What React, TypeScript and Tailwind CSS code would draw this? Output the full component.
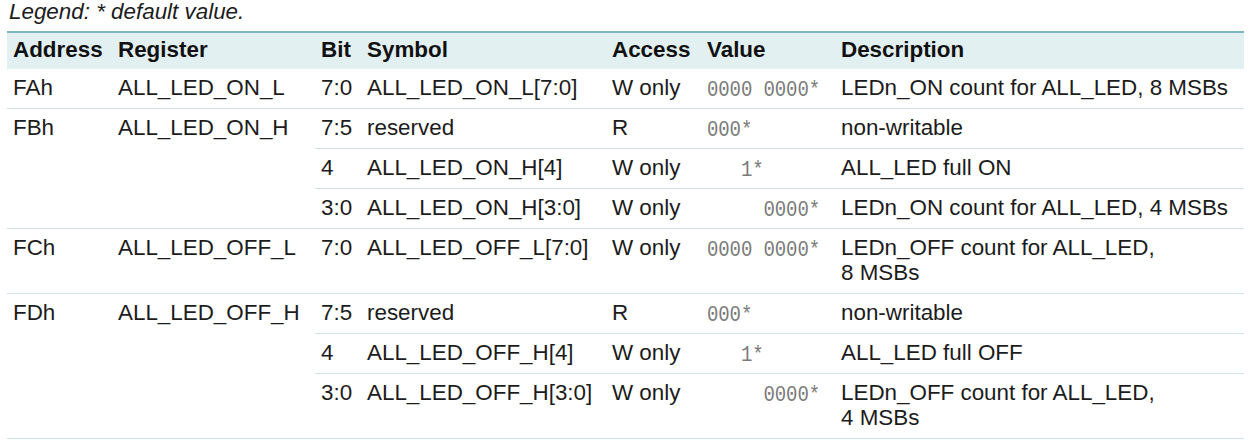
import React from "react";

type Row = {
  bit: string;
  symbol: string;
  access: string;
  value: string;
  desc: React.ReactNode;
};

type Group = { addr: string; reg: string; rows: Row[] };

const groups: Group[] = [
  {
    addr: "FAh",
    reg: "ALL_LED_ON_L",
    rows: [
      { bit: "7:0", symbol: "ALL_LED_ON_L[7:0]", access: "W only", value: "0000 0000*", desc: "LEDn_ON count for ALL_LED, 8 MSBs" },
    ],
  },
  {
    addr: "FBh",
    reg: "ALL_LED_ON_H",
    rows: [
      { bit: "7:5", symbol: "reserved", access: "R", value: "000*", desc: "non-writable" },
      { bit: "4", symbol: "ALL_LED_ON_H[4]", access: "W only", value: "   1*", desc: "ALL_LED full ON" },
      { bit: "3:0", symbol: "ALL_LED_ON_H[3:0]", access: "W only", value: "     0000*", desc: "LEDn_ON count for ALL_LED, 4 MSBs" },
    ],
  },
  {
    addr: "FCh",
    reg: "ALL_LED_OFF_L",
    rows: [
      {
        bit: "7:0",
        symbol: "ALL_LED_OFF_L[7:0]",
        access: "W only",
        value: "0000 0000*",
        desc: (
          <>
            LEDn_OFF count for ALL_LED,
            <br />8 MSBs
          </>
        ),
      },
    ],
  },
  {
    addr: "FDh",
    reg: "ALL_LED_OFF_H",
    rows: [
      { bit: "7:5", symbol: "reserved", access: "R", value: "000*", desc: "non-writable" },
      { bit: "4", symbol: "ALL_LED_OFF_H[4]", access: "W only", value: "   1*", desc: "ALL_LED full OFF" },
      {
        bit: "3:0",
        symbol: "ALL_LED_OFF_H[3:0]",
        access: "W only",
        value: "     0000*",
        desc: (
          <>
            LEDn_OFF count for ALL_LED,
            <br />4 MSBs
          </>
        ),
      },
    ],
  },
];

const cell = "align-top pt-[6px] pb-[8px] pl-[6px] pr-0 border-b border-[#cfe2e9] whitespace-nowrap";
const th = "pl-[6px] pt-[4px] pb-[7px] font-bold";

export default function App() {
  return (
    <div className="w-[1249px] h-[445px] bg-white text-[#1c1c1c] font-['Liberation_Sans',Arial,sans-serif] text-[22.4px] leading-[25px]">
      <div className="pl-[9px] italic leading-[24px] h-[31px]">Legend: * default value.</div>
      <table className="ml-[7px] w-[1237px] border-collapse table-fixed">
        <colgroup>
          <col className="w-[105px]" />
          <col className="w-[203px]" />
          <col className="w-[46px]" />
          <col className="w-[245px]" />
          <col className="w-[95px]" />
          <col className="w-[134px]" />
          <col />
        </colgroup>
        <thead>
          <tr className="bg-[#e2f0f1] border-t-2 border-[#7db3c3] text-[#111] text-left">
            <th className={th}>Address</th>
            <th className={th}>Register</th>
            <th className={th}>Bit</th>
            <th className={th}>Symbol</th>
            <th className={th}>Access</th>
            <th className={th}>Value</th>
            <th className={th}>Description</th>
          </tr>
        </thead>
        <tbody>
          {groups.map((g) =>
            g.rows.map((r, i) => (
              <tr key={g.addr + i}>
                {i === 0 && (
                  <>
                    <td rowSpan={g.rows.length} className={cell}>
                      {g.addr}
                    </td>
                    <td rowSpan={g.rows.length} className={cell}>
                      {g.reg}
                    </td>
                  </>
                )}
                <td className={cell}>{r.bit}</td>
                <td className={cell}>{r.symbol}</td>
                <td className={cell}>{r.access}</td>
                <td className={cell}>
                  <div className="h-[25px] leading-[30px] whitespace-pre font-['Liberation_Mono',monospace] text-[19px] tracking-[-0.1px] text-[#7a7a7a] scale-y-[1.15] origin-center">
                    {r.value}
                  </div>
                </td>
                <td className={cell}>{r.desc}</td>
              </tr>
            ))
          )}
        </tbody>
      </table>
    </div>
  );
}
